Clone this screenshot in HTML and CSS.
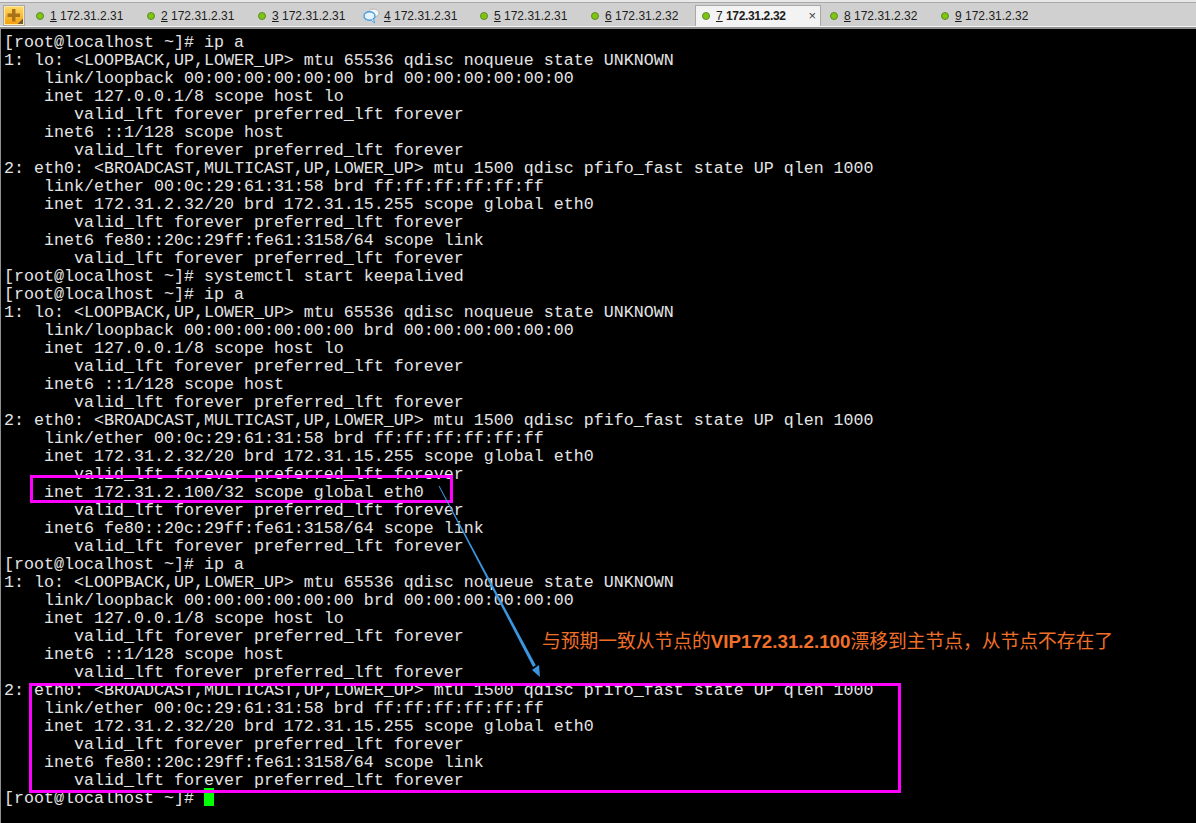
FILE: index.html
```html
<!DOCTYPE html>
<html lang="zh-CN">
<head>
<meta charset="utf-8">
<title>Terminal</title>
<link rel="stylesheet" href="styles.css">
</head>
<body>
<div class="app">
  <div class="tabbar">
    <button class="add" aria-label="add">
      <svg width="20" height="19" viewBox="0 0 20 19"><path d="M8 3h3.500v4.500H16V11h-4.500v4.500H8V11H3.500V7.500H8z" fill="#a8721a"/><path d="M19 12.500V18h-5.500z" fill="#6e5a38"/></svg>
    </button>
    <div class="tab"><span class="dot"></span><span class="label"><u>1</u> 172.31.2.31</span></div>
    <div class="tab"><span class="dot"></span><span class="label"><u>2</u> 172.31.2.31</span></div>
    <div class="tab"><span class="dot"></span><span class="label"><u>3</u> 172.31.2.31</span></div>
    <div class="tab tab-msg">
      <svg class="bubble" width="17" height="16" viewBox="0 0 17 16"><ellipse cx="10.500" cy="5" rx="5.500" ry="4" fill="#f4f4f4" stroke="#b4b4b4"/><ellipse cx="6.500" cy="8" rx="5.500" ry="4.200" fill="#e6f3fc" stroke="#4a9fdc" stroke-width="1.400"/><path d="M8 12l3.500 3-.8-4" fill="#e6f3fc" stroke="#4a9fdc"/></svg>
      <span class="label"><u>4</u> 172.31.2.31</span>
    </div>
    <div class="tab"><span class="dot"></span><span class="label"><u>5</u> 172.31.2.31</span></div>
    <div class="tab"><span class="dot"></span><span class="label"><u>6</u> 172.31.2.32</span></div>
    <div class="tab tab-active"><span class="dot"></span><span class="label"><u>7</u> <b>172.31.2.32</b></span><span class="close">×</span></div>
    <div class="tab"><span class="dot"></span><span class="label"><u>8</u> 172.31.2.32</span></div>
    <div class="tab"><span class="dot"></span><span class="label"><u>9</u> 172.31.2.32</span></div>
  </div>
  <div class="terminal">
<pre class="output">[root@localhost ~]# ip a
1: lo: &lt;LOOPBACK,UP,LOWER_UP&gt; mtu 65536 qdisc noqueue state UNKNOWN
    link/loopback 00:00:00:00:00:00 brd 00:00:00:00:00:00
    inet 127.0.0.1/8 scope host lo
       valid_lft forever preferred_lft forever
    inet6 ::1/128 scope host
       valid_lft forever preferred_lft forever
2: eth0: &lt;BROADCAST,MULTICAST,UP,LOWER_UP&gt; mtu 1500 qdisc pfifo_fast state UP qlen 1000
    link/ether 00:0c:29:61:31:58 brd ff:ff:ff:ff:ff:ff
    inet 172.31.2.32/20 brd 172.31.15.255 scope global eth0
       valid_lft forever preferred_lft forever
    inet6 fe80::20c:29ff:fe61:3158/64 scope link
       valid_lft forever preferred_lft forever
[root@localhost ~]# systemctl start keepalived
[root@localhost ~]# ip a
1: lo: &lt;LOOPBACK,UP,LOWER_UP&gt; mtu 65536 qdisc noqueue state UNKNOWN
    link/loopback 00:00:00:00:00:00 brd 00:00:00:00:00:00
    inet 127.0.0.1/8 scope host lo
       valid_lft forever preferred_lft forever
    inet6 ::1/128 scope host
       valid_lft forever preferred_lft forever
2: eth0: &lt;BROADCAST,MULTICAST,UP,LOWER_UP&gt; mtu 1500 qdisc pfifo_fast state UP qlen 1000
    link/ether 00:0c:29:61:31:58 brd ff:ff:ff:ff:ff:ff
    inet 172.31.2.32/20 brd 172.31.15.255 scope global eth0
       valid_lft forever preferred_lft forever
    inet 172.31.2.100/32 scope global eth0
       valid_lft forever preferred_lft forever
    inet6 fe80::20c:29ff:fe61:3158/64 scope link
       valid_lft forever preferred_lft forever
[root@localhost ~]# ip a
1: lo: &lt;LOOPBACK,UP,LOWER_UP&gt; mtu 65536 qdisc noqueue state UNKNOWN
    link/loopback 00:00:00:00:00:00 brd 00:00:00:00:00:00
    inet 127.0.0.1/8 scope host lo
       valid_lft forever preferred_lft forever
    inet6 ::1/128 scope host
       valid_lft forever preferred_lft forever
2: eth0: &lt;BROADCAST,MULTICAST,UP,LOWER_UP&gt; mtu 1500 qdisc pfifo_fast state UP qlen 1000
    link/ether 00:0c:29:61:31:58 brd ff:ff:ff:ff:ff:ff
    inet 172.31.2.32/20 brd 172.31.15.255 scope global eth0
       valid_lft forever preferred_lft forever
    inet6 fe80::20c:29ff:fe61:3158/64 scope link
       valid_lft forever preferred_lft forever
[root@localhost ~]# <span class="cursor"> </span></pre>
    <div class="mark mark-vip"></div>
    <div class="mark mark-eth"></div>
    <svg class="arrow" width="110" height="200" viewBox="0 0 110 200">
      <path d="M-.4 .2 L.4 -.2 L96.800 179.300 L94 180.900 Z" fill="#3a96e0"/>
      <path d="M101 191 L93 184 L100 179 Z" fill="#3a96e0"/>
    </svg>
    <div class="note">与预期一致从节点的<b class="note-ip">VIP172.31.2.100</b>漂移到主节点，从节点不存在了</div>
  </div>
</div>
</body>
</html>
```

FILE: styles.css
```css
html, body {
  margin: 0;
  height: 100%;
  overflow: hidden;
  background: #000;
}

.app {
  display: flex;
  flex-direction: column;
  height: 823px;
}

.tabbar {
  box-sizing: border-box;
  height: 29px;
  flex: none;
  display: flex;
  align-items: flex-end;
  padding: 3px 0 1px 3px;
  background: #d0d0d0;
  border-top: 1px solid #e8e8e8;
  box-shadow: inset 0 1px 0 #e8e8e8, inset 0 2px 0 #a9a9a9, inset 0 -1px 0 #f6f6f6;
  border-bottom: 2px solid #8f8f8f;
  font: 12px/20px "Liberation Sans", sans-serif;
  color: #1c1c1c;
}

.add {
  box-sizing: border-box;
  width: 22px;
  height: 21px;
  padding: 0;
  margin-right: 8px;
  border: 1px solid #a8a8a8;
  box-shadow: inset 0 0 0 1px #ffe9a8;
  background: linear-gradient(#ffdc6a, #f59c08);
  display: flex;
}

.tab {
  width: 111px;
  height: 21px;
  flex: none;
  display: flex;
  align-items: center;
  box-sizing: border-box;
  padding-left: 3px;
}

.tab-msg {
  padding-left: 0;
}

.dot {
  box-sizing: border-box;
  width: 8px;
  height: 8px;
  margin-right: 6px;
  border-radius: 50%;
  background: #7ec512;
  border: 1px solid #5f8a2a;
  flex: none;
}

.bubble {
  margin-right: 4px;
  margin-left: -3px;
  flex: none;
}

.label {
  white-space: nowrap;
}

.tab-active {
  width: 126px;
  margin-left: -4px;
  padding-left: 6px;
  margin-right: 6px;
  background: #f3f3f3;
  border: 1px solid #a8a8a8;
  border-bottom: 0;
}

.tab-active b {
  font-weight: bold;
  letter-spacing: -.35px;
}

.close {
  margin-left: auto;
  margin-right: 4px;
  font-size: 13px;
  color: #444;
}

.terminal {
  position: relative;
  flex: 1;
  background: #000;
  border-left: 1px solid #8f8f8f;
}

.output {
  margin: 0;
  padding: 5px 0 0 3px;
  font: 16.67px/18px "Liberation Mono", "Courier New", monospace;
  color: #e4e4e4;
}

.cursor {
  display: inline-block;
  width: 10px;
  height: 18px;
  margin-top: -2px;
  vertical-align: top;
  background: #00ff00;
}

.mark {
  position: absolute;
  box-sizing: border-box;
  border: 3px solid #ff00ff;
}

.mark-vip {
  left: 29px;
  top: 446px;
  width: 423px;
  height: 28px;
}

.mark-eth {
  left: 28px;
  top: 654px;
  width: 872px;
  height: 110px;
}

.arrow {
  position: absolute;
  left: 438px;
  top: 457px;
  overflow: visible;
}

.note {
  position: absolute;
  left: 541px;
  top: 599px;
  font: 18.75px/24px "Noto Sans CJK SC", sans-serif;
  color: #f0702a;
  white-space: nowrap;
}

.note-ip {
  display: inline-block;
  font-family: "Liberation Sans", sans-serif;
  font-weight: bold;
}
```
